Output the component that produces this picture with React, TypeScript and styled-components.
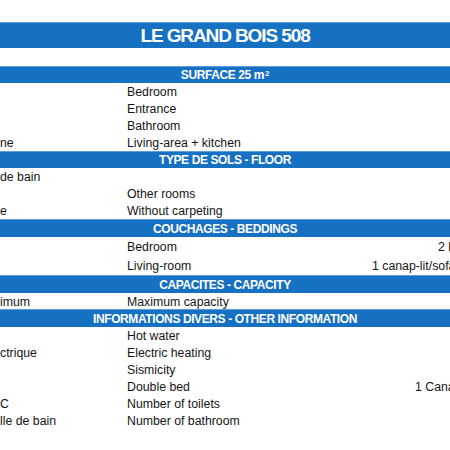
import React from 'react';
import styled, { createGlobalStyle } from 'styled-components';

const GlobalStyle = createGlobalStyle`
  html, body {
    margin: 0;
    padding: 0;
    background: #ffffff;
  }
`;

const BLUE = '#1671c3';

const Sheet = styled.div`
  width: 450px;
  height: 450px;
  overflow: hidden;
  background: #ffffff;
  padding-top: 22px;
  box-sizing: border-box;
  font-family: 'Liberation Sans', Arial, sans-serif;
  color: #151515;
`;

const TitleBar = styled.div`
  height: 26px;
  margin-bottom: 18px;
  background: ${BLUE};
  border-top: 1px solid #5b9fdc;
  box-sizing: border-box;
  display: flex;
  align-items: center;
  justify-content: center;
  padding-top: 1px;
  color: #ffffff;
  font-weight: 700;
  font-size: 19px;
  letter-spacing: -1.1px;
  white-space: nowrap;
`;

const SectionBar = styled.div<{ $h: number }>`
  height: ${(p) => p.$h}px;
  background: ${BLUE};
  border-top: 1px solid #5b9fdc;
  box-sizing: border-box;
  display: flex;
  align-items: center;
  justify-content: center;
  color: #ffffff;
  font-weight: 700;
  font-size: 12px;
  letter-spacing: -0.4px;
  white-space: nowrap;

  & sup {
    font-size: 8px;
    line-height: 0;
    position: relative;
    top: -1px;
    margin-left: 1px;
  }
`;

const Row = styled.div<{ $h?: number }>`
  height: ${(p) => p.$h ?? 17}px;
  display: grid;
  grid-template-columns: 127px 173px 1fr;
  align-items: center;
  font-size: 12.3px;
  white-space: nowrap;
  overflow: hidden;
`;

const Label = styled.span`
  padding-top: 1px;
  overflow: hidden;
`;

const Value = styled.span<{ $indent: number }>`
  padding-left: ${(p) => p.$indent}px;
  padding-top: 1px;
`;

type Line = { fr: string; en: string; value?: string; indent?: number; h?: number };

type Section = { title: React.ReactNode; h: number; rows: Line[] };

const sections: Section[] = [
  {
    title: (
      <>
        SURFACE 25 m<sup>2</sup>
      </>
    ),
    h: 17,
    rows: [
      { fr: '', en: 'Bedroom' },
      { fr: '', en: 'Entrance' },
      { fr: '', en: 'Bathroom' },
      { fr: 'ne', en: 'Living-area + kitchen' },
    ],
  },
  {
    title: 'TYPE DE SOLS - FLOOR',
    h: 17,
    rows: [
      { fr: 'de bain', en: '' },
      { fr: '', en: 'Other rooms' },
      { fr: 'e', en: 'Without carpeting' },
    ],
  },
  {
    title: 'COUCHAGES - BEDDINGS',
    h: 18,
    rows: [
      { fr: '', en: 'Bedroom', value: '2 lits simples', indent: 138, h: 19 },
      { fr: '', en: 'Living-room', value: '1 canap-lit/sofa-bed', indent: 72, h: 19 },
    ],
  },
  {
    title: 'CAPACITES - CAPACITY',
    h: 18,
    rows: [{ fr: 'imum', en: 'Maximum capacity', h: 16 }],
  },
  {
    title: 'INFORMATIONS DIVERS - OTHER INFORMATION',
    h: 18,
    rows: [
      { fr: '', en: 'Hot water' },
      { fr: 'ctrique', en: 'Electric heating' },
      { fr: '', en: 'Sismicity' },
      { fr: '', en: 'Double bed', value: '1 Canapé', indent: 115 },
      { fr: 'C', en: 'Number of toilets' },
      { fr: 'lle de bain', en: 'Number of bathroom' },
    ],
  },
];

const App: React.FC = () => {
  return (
    <>
      <GlobalStyle />
      <Sheet>
        <TitleBar>LE GRAND BOIS 508</TitleBar>
        {sections.map((section, i) => (
          <React.Fragment key={i}>
            <SectionBar $h={section.h}>{section.title}</SectionBar>
            {section.rows.map((row, j) => (
              <Row key={j} $h={row.h}>
                <Label>{row.fr}</Label>
                <Label>{row.en}</Label>
                {row.value ? <Value $indent={row.indent ?? 0}>{row.value}</Value> : <span />}
              </Row>
            ))}
          </React.Fragment>
        ))}
      </Sheet>
    </>
  );
};

export default App;
